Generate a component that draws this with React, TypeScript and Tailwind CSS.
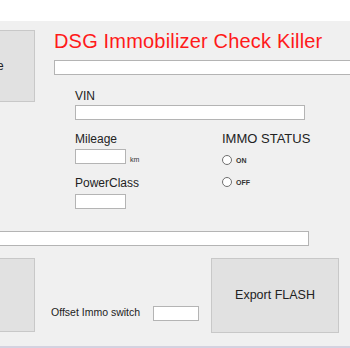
import React from 'react';

const font = { fontFamily: '"Liberation Sans", Arial, sans-serif' };

const TextBox: React.FC<{ className?: string }> = ({ className = '' }) => (
  <div className={`h-[15px] bg-white border border-[#b4b4b4] ${className}`} />
);

const Radio: React.FC<{ label: string }> = ({ label }) => (
  <div className="flex items-center h-[10px]">
    <div className="w-[10px] h-[10px] rounded-full border border-[#6f6f6f] bg-white" />
    <span className="ml-[4px] text-[7px] font-bold text-[#333] leading-none">{label}</span>
  </div>
);

const App: React.FC = () => {
  return (
    <div className="w-[350px] h-[348px] overflow-hidden bg-white" style={font}>
      <div className="h-[21px] bg-white" />
      <div className="h-[327px] bg-[#f0f0f0] flex flex-col">
        {/* upper block */}
        <div className="flex">
          <div className="mt-[9px] w-[35px] h-[72px] bg-[#e1e1e1] border border-[#c8c8c8] border-l-0 flex items-center shrink-0 overflow-hidden">
            <span className="ml-[-3px] text-[12px] text-[#222]">e</span>
          </div>
          <div className="ml-[19px] flex-1 flex flex-col">
            <div className="mt-[9px] h-[23px] text-[20px] leading-[23px] tracking-[0.18px] text-[#ff1a1a] whitespace-nowrap">
              DSG Immobilizer Check Killer
            </div>
            <TextBox className="mt-[7px] w-[320px] border-r-0" />
            <div className="ml-[21px] mt-[14px] flex flex-col">
              <div className="h-[14px] text-[12px] leading-[14px] text-[#222]">VIN</div>
              <TextBox className="mt-[2px] w-[230px]" />
              <div className="flex">
                <div className="w-[147px] flex flex-col">
                  <div className="mt-[12px] h-[14px] text-[12px] leading-[14px] text-[#222]">Mileage</div>
                  <div className="mt-[3px] flex items-end">
                    <TextBox className="w-[51px]" />
                    <span className="ml-[4px] mb-[1px] text-[7px] leading-none text-[#333]">km</span>
                  </div>
                  <div className="mt-[12px] h-[14px] text-[12px] leading-[14px] text-[#222]">PowerClass</div>
                  <TextBox className="mt-[4px] w-[51px]" />
                </div>
                <div className="flex flex-col">
                  <div className="mt-[11px] h-[15px] text-[13px] leading-[15px] text-[#222]">IMMO STATUS</div>
                  <div className="mt-[9px]"><Radio label="ON" /></div>
                  <div className="mt-[12px]"><Radio label="OFF" /></div>
                </div>
              </div>
            </div>
          </div>
        </div>
        <TextBox className="mt-[22px] w-[309px] border-l-0" />
        {/* lower block */}
        <div className="mt-[12px] flex">
          <div className="w-[35px] h-[74px] bg-[#e1e1e1] border border-[#c8c8c8] border-l-0 shrink-0" />
          <div className="ml-[16px] flex items-center self-end mb-[12px]">
            <span className="text-[10.5px] text-[#222] whitespace-nowrap">Offset Immo switch</span>
            <TextBox className="ml-[13px] w-[46px]" />
          </div>
          <div className="ml-auto mr-[11px] w-[128px] h-[75px] bg-[#e1e1e1] border border-[#c8c8c8] flex items-center justify-center">
            <span className="text-[12.5px] text-[#222]">Export FLASH</span>
          </div>
        </div>
        <div className="flex-1" />
        <div className="h-[2px] bg-[#d4d2e0]" />
      </div>
    </div>
  );
};

export default App;
